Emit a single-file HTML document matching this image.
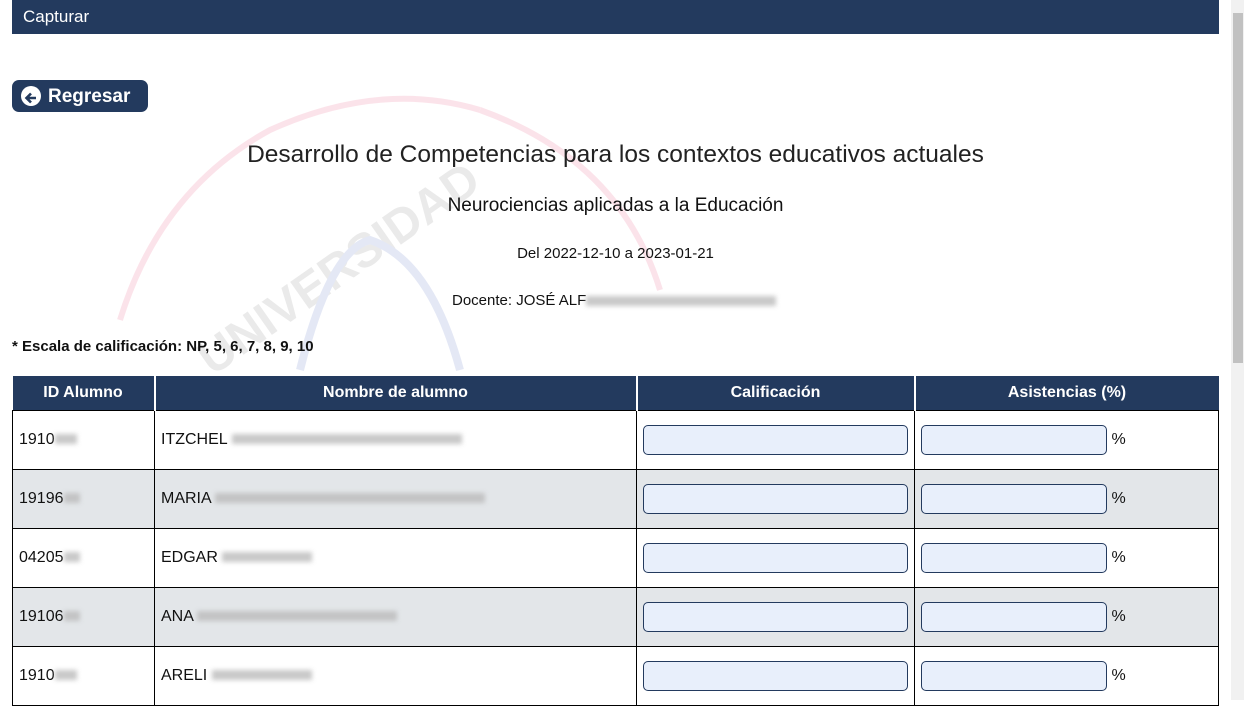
<!DOCTYPE html>
<html><head><meta charset="utf-8"><style>
*{box-sizing:border-box;margin:0;padding:0}
body{width:1244px;height:700px;overflow:hidden;background:#fff;font-family:"Liberation Sans",sans-serif;color:#111;position:relative}
.bar{position:absolute;left:12px;top:0;width:1207px;height:34px;background:#233a5e;color:#fff;font-size:17px;line-height:34px;padding-left:11px}
.btn{position:absolute;left:12px;top:80px;width:136px;height:32px;background:#233a5e;border-radius:7px;color:#fff;font-weight:bold;font-size:19px;line-height:33px;padding-left:36px}
.btn .ic{position:absolute;left:9px;top:6px;width:20px;height:20px;border-radius:50%;background:#fff}
.c{position:absolute;left:0;width:1231px;text-align:center}
.blur{display:inline-block;height:10px;background:#bbb;filter:blur(2.5px);vertical-align:middle;opacity:.8}
table{position:absolute;left:12px;top:376px;width:1207px;border-collapse:collapse;font-size:16px}
th{background:#233a5e;color:#fff;height:34px;font-size:16px;border-left:2px solid #fff}
th:first-child{border-left:none}
td{height:59px;border:1px solid #000;padding:0 6px;vertical-align:middle}
tr.g td{background:#e3e6e9}
.in{display:inline-block;height:30px;border:1px solid #233a5e;border-radius:5px;background:#e8effb;vertical-align:middle}
.sb{position:absolute;left:1231px;top:0;width:13px;height:700px;background:#f1f1f1}
.th{position:absolute;left:1233px;top:13px;width:10px;height:350px;background:#c1c1c1}
</style></head><body>
<svg style="position:absolute;left:100px;top:70px" width="620" height="320" opacity="0.2">
<path d="M20 250 Q60 120 170 60 Q280 10 380 40" fill="none" stroke="#ee7a9a" stroke-width="6"/>
<path d="M380 40 Q520 90 560 220" fill="none" stroke="#ee7a9a" stroke-width="6"/>
<text x="60" y="260" font-size="48" font-weight="bold" fill="#999" transform="rotate(-35 160 200)">UNIVERSIDAD</text>
<path d="M200 300 Q230 180 270 170 Q330 190 360 300" fill="none" stroke="#7b8fd0" stroke-width="8"/>
</svg>
<div class="bar">Capturar</div>
<div class="btn"><span class="ic"><svg width="20" height="20"><path d="M15 10H6M10 5.5L5.5 10 10 14.5" stroke="#233a5e" stroke-width="2.6" fill="none"/></svg></span>Regresar</div>
<div class="c" style="top:141px;font-size:24.5px;color:#222">Desarrollo de Competencias para los contextos educativos actuales</div>
<div class="c" style="top:195px;font-size:19px">Neurociencias aplicadas a la Educación</div>
<div class="c" style="top:245px;font-size:15px">Del 2022-12-10 a 2023-01-21</div>
<div style="position:absolute;left:452px;top:292px;font-size:15px">Docente: JOSÉ ALF<span class="blur" style="width:190px"></span></div>
<div style="position:absolute;left:12px;top:338px;font-size:15px;font-weight:bold">* Escala de calificación: NP, 5, 6, 7, 8, 9, 10</div>
<table>
<tr><th style="width:142px">ID Alumno</th><th style="width:482px">Nombre de alumno</th><th style="width:278px">Calificación</th><th>Asistencias (%)</th></tr>
<tr><td>1910<span class="blur" style="width:22px"></span></td><td>ITZCHEL <span class="blur" style="width:230px"></span></td><td><span class="in" style="width:265px"></span></td><td><span class="in" style="width:186px"></span> %</td></tr>
<tr class="g"><td>19196<span class="blur" style="width:16px"></span></td><td>MARIA <span class="blur" style="width:270px"></span></td><td><span class="in" style="width:265px"></span></td><td><span class="in" style="width:186px"></span> %</td></tr>
<tr><td>04205<span class="blur" style="width:16px"></span></td><td>EDGAR <span class="blur" style="width:90px"></span></td><td><span class="in" style="width:265px"></span></td><td><span class="in" style="width:186px"></span> %</td></tr>
<tr class="g"><td>19106<span class="blur" style="width:16px"></span></td><td>ANA <span class="blur" style="width:200px"></span></td><td><span class="in" style="width:265px"></span></td><td><span class="in" style="width:186px"></span> %</td></tr>
<tr><td>1910<span class="blur" style="width:22px"></span></td><td>ARELI <span class="blur" style="width:100px"></span></td><td><span class="in" style="width:265px"></span></td><td><span class="in" style="width:186px"></span> %</td></tr>
</table>
<div class="sb"></div><div class="th"></div>
</body></html>
